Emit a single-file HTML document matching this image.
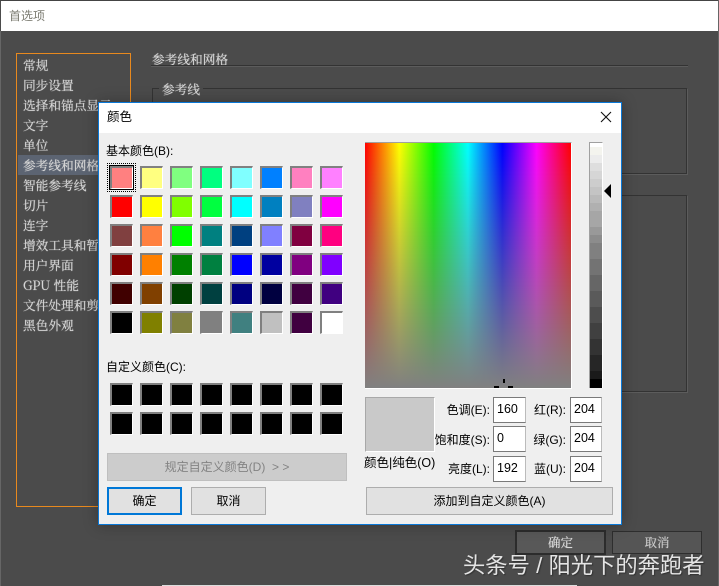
<!DOCTYPE html>
<html><head><meta charset="utf-8">
<style>
html,body{margin:0;padding:0;}
body{width:719px;height:586px;position:relative;overflow:hidden;background:#4b4b4b;font-family:"Liberation Sans","Noto Sans CJK SC",sans-serif;font-size:12px;color:#000;}
.a{position:absolute;box-sizing:border-box;}
.t{position:absolute;white-space:nowrap;line-height:16px;}
.li{position:absolute;left:23px;font-size:12.7px;line-height:20px;color:#d6d6d6;white-space:nowrap;font-family:"Noto Serif CJK SC","Noto Sans CJK SC",serif;text-shadow:0 0 .7px #d6d6d6;}
.s{position:absolute;box-sizing:border-box;width:23px;height:23px;border:2px solid;border-color:#808080 #fff #fff #808080;border-width:2px 1px 1px 2px;}
.in{position:absolute;box-sizing:border-box;width:33px;height:26px;background:#fff;border:1px solid #7a7a7a;border-right-color:#bbb;font-size:12.5px;line-height:22px;padding-left:3px;}
.in.w{width:32px;}
.lb{position:absolute;white-space:nowrap;font-size:12px;line-height:16px;text-align:right;}
.btn{position:absolute;box-sizing:border-box;background:#e1e1e1;border:1px solid #adadad;text-align:center;font-size:12px;line-height:26px;}
</style></head><body>
<div class="a" style="left:0;top:0;width:719px;height:1px;background:#444"></div>
<div class="a" style="left:1px;top:1px;width:717px;height:30px;background:#fff"></div>
<div class="t" style="left:9px;top:8px;color:#7c7c72;font-size:12px">首选项</div>
<div class="a" style="left:0;top:31px;width:1px;height:555px;background:#666"></div>
<div class="a" style="left:718px;top:0;width:1px;height:586px;background:#666"></div>

<div class="a" style="left:16px;top:53px;width:115px;height:454px;border:1px solid #e8891e;background:#4b4b4b"></div>
<div class="a" style="left:18px;top:155px;width:90px;height:20px;background:#5c6472"></div>
<div class="li" style="top:55px">常规</div>
<div class="li" style="top:75px">同步设置</div>
<div class="li" style="top:95px">选择和锚点显示</div>
<div class="li" style="top:115px">文字</div>
<div class="li" style="top:135px">单位</div>
<div class="li" style="top:155px">参考线和网格</div>
<div class="li" style="top:175px">智能参考线</div>
<div class="li" style="top:195px">切片</div>
<div class="li" style="top:215px">连字</div>
<div class="li" style="top:235px">增效工具和暂存盘</div>
<div class="li" style="top:255px">用户界面</div>
<div class="li" style="top:275px">GPU 性能</div>
<div class="li" style="top:295px">文件处理和剪贴板</div>
<div class="li" style="top:315px">黑色外观</div>

<div class="li" style="left:152px;top:49px">参考线和网格</div>
<div class="a" style="left:151px;top:65px;width:537px;height:2px;border-top:1px solid #333;border-bottom:1px solid #5c5c5c"></div>
<div class="a" style="left:152px;top:88px;width:535px;height:86px;border:1px solid #333;box-shadow:1px 1px 0 #5c5c5c"></div>
<div class="a" style="left:159px;top:80px;width:44px;height:18px;background:#4b4b4b"></div>
<div class="li" style="left:162px;top:79px">参考线</div>
<div class="a" style="left:152px;top:195px;width:535px;height:197px;border:1px solid #333;box-shadow:1px 1px 0 #5c5c5c"></div>

<div class="a" style="left:515px;top:530px;width:91px;height:25px;background:#585858;border:2px solid #2c2c2c;color:#ddd;text-align:center;line-height:21px;font-family:'Noto Serif CJK SC',serif;font-size:12.5px;text-shadow:0 0 .6px #ddd">确定</div>
<div class="a" style="left:612px;top:531px;width:90px;height:23px;background:#555;border:1px solid #2e2e2e;color:#ccc;text-align:center;line-height:21px;font-family:'Noto Serif CJK SC',serif;font-size:12.5px;text-shadow:0 0 .6px #ccc">取消</div>
<div class="a" style="left:162px;top:585px;width:415px;height:1px;background:#ddd"></div>

<div class="a" style="left:98px;top:102px;width:524px;height:423px;background:#efefef;border:1px solid #0a78d7;box-shadow:0 0 14px rgba(0,0,0,.28)">
<div class="a" style="left:0;top:0;width:522px;height:30px;background:#fff"></div>
</div>
<div class="t" style="left:107px;top:109px;font-size:12.5px">颜色</div>
<svg class="a" style="left:600px;top:111px" width="12" height="12"><path d="M1 1L11 11M11 1L1 11" stroke="#111" stroke-width="1.1" fill="none"/></svg>

<div class="t" style="left:106px;top:143px">基本颜色(B):</div>
<div class="a" style="left:107px;top:163px;width:29px;height:29px;border:1px dotted #000"></div>
<div class="a" style="left:109px;top:165px;width:25px;height:25px;border:1px solid #000"></div>
<div class="s" style="left:110px;top:166px;background:#ff8080"></div>
<div class="s" style="left:140px;top:166px;background:#ffff80"></div>
<div class="s" style="left:170px;top:166px;background:#80ff80"></div>
<div class="s" style="left:200px;top:166px;background:#00ff80"></div>
<div class="s" style="left:230px;top:166px;background:#80ffff"></div>
<div class="s" style="left:260px;top:166px;background:#0080ff"></div>
<div class="s" style="left:290px;top:166px;background:#ff80c0"></div>
<div class="s" style="left:320px;top:166px;background:#ff80ff"></div>
<div class="s" style="left:110px;top:195px;background:#ff0000"></div>
<div class="s" style="left:140px;top:195px;background:#ffff00"></div>
<div class="s" style="left:170px;top:195px;background:#80ff00"></div>
<div class="s" style="left:200px;top:195px;background:#00ff40"></div>
<div class="s" style="left:230px;top:195px;background:#00ffff"></div>
<div class="s" style="left:260px;top:195px;background:#0080c0"></div>
<div class="s" style="left:290px;top:195px;background:#8080c0"></div>
<div class="s" style="left:320px;top:195px;background:#ff00ff"></div>
<div class="s" style="left:110px;top:224px;background:#804040"></div>
<div class="s" style="left:140px;top:224px;background:#ff8040"></div>
<div class="s" style="left:170px;top:224px;background:#00ff00"></div>
<div class="s" style="left:200px;top:224px;background:#008080"></div>
<div class="s" style="left:230px;top:224px;background:#004080"></div>
<div class="s" style="left:260px;top:224px;background:#8080ff"></div>
<div class="s" style="left:290px;top:224px;background:#800040"></div>
<div class="s" style="left:320px;top:224px;background:#ff0080"></div>
<div class="s" style="left:110px;top:253px;background:#800000"></div>
<div class="s" style="left:140px;top:253px;background:#ff8000"></div>
<div class="s" style="left:170px;top:253px;background:#008000"></div>
<div class="s" style="left:200px;top:253px;background:#008040"></div>
<div class="s" style="left:230px;top:253px;background:#0000ff"></div>
<div class="s" style="left:260px;top:253px;background:#0000a0"></div>
<div class="s" style="left:290px;top:253px;background:#800080"></div>
<div class="s" style="left:320px;top:253px;background:#8000ff"></div>
<div class="s" style="left:110px;top:282px;background:#400000"></div>
<div class="s" style="left:140px;top:282px;background:#804000"></div>
<div class="s" style="left:170px;top:282px;background:#004000"></div>
<div class="s" style="left:200px;top:282px;background:#004040"></div>
<div class="s" style="left:230px;top:282px;background:#000080"></div>
<div class="s" style="left:260px;top:282px;background:#000040"></div>
<div class="s" style="left:290px;top:282px;background:#400040"></div>
<div class="s" style="left:320px;top:282px;background:#400080"></div>
<div class="s" style="left:110px;top:311px;background:#000000"></div>
<div class="s" style="left:140px;top:311px;background:#808000"></div>
<div class="s" style="left:170px;top:311px;background:#808040"></div>
<div class="s" style="left:200px;top:311px;background:#808080"></div>
<div class="s" style="left:230px;top:311px;background:#408080"></div>
<div class="s" style="left:260px;top:311px;background:#c0c0c0"></div>
<div class="s" style="left:290px;top:311px;background:#400040"></div>
<div class="s" style="left:320px;top:311px;background:#ffffff"></div>

<div class="t" style="left:106px;top:359px">自定义颜色(C):</div>
<div class="s" style="left:110px;top:383px;background:#000"></div>
<div class="s" style="left:140px;top:383px;background:#000"></div>
<div class="s" style="left:170px;top:383px;background:#000"></div>
<div class="s" style="left:200px;top:383px;background:#000"></div>
<div class="s" style="left:230px;top:383px;background:#000"></div>
<div class="s" style="left:260px;top:383px;background:#000"></div>
<div class="s" style="left:290px;top:383px;background:#000"></div>
<div class="s" style="left:320px;top:383px;background:#000"></div>
<div class="s" style="left:110px;top:412px;background:#000"></div>
<div class="s" style="left:140px;top:412px;background:#000"></div>
<div class="s" style="left:170px;top:412px;background:#000"></div>
<div class="s" style="left:200px;top:412px;background:#000"></div>
<div class="s" style="left:230px;top:412px;background:#000"></div>
<div class="s" style="left:260px;top:412px;background:#000"></div>
<div class="s" style="left:290px;top:412px;background:#000"></div>
<div class="s" style="left:320px;top:412px;background:#000"></div>

<div class="btn" style="left:107px;top:453px;width:240px;height:28px;background:#ccc;border-color:#bfbfbf;color:#838383">规定自定义颜色(D) &nbsp;&gt; &gt;</div>
<div class="btn" style="left:107px;top:487px;width:75px;height:28px;border:2px solid #0078d7;line-height:24px">确定</div>
<div class="btn" style="left:191px;top:487px;width:75px;height:28px">取消</div>

<div class="a" style="left:365px;top:142px;width:207px;height:247px;border-top:1px solid #a0a0a0;border-right:1px solid #fff;border-bottom:1px solid #fff;background:linear-gradient(to bottom,rgba(128,128,128,0),#808080),linear-gradient(to right,#f00,#ff0 16.67%,#0f0 33.33%,#0ff 50%,#00f 66.67%,#f0f 83.33%,#f00)"></div>
<div class="a" style="left:503px;top:379px;width:2px;height:4px;background:#000"></div>
<div class="a" style="left:494px;top:386px;width:5px;height:2px;background:#000"></div>
<div class="a" style="left:508px;top:386px;width:5px;height:2px;background:#000"></div>

<div class="a" style="left:589px;top:142px;width:14px;height:246px;border-top:1px solid #a0a0a0;border-left:1px solid #a0a0a0;border-right:1px solid #fff;background:linear-gradient(to bottom,#fff 0,#fff 4px,#f4f4ee 4px,#f4f4ee 12px,#ececec 12px,#ececec 20px,#dedede 20px,#dedede 28px,#d6d6d6 28px,#d6d6d6 36px,#cdcdcd 36px,#cdcdcd 44px,#c4c4c4 44px,#c4c4c4 52px,#bababa 52px,#bababa 60px,#b0b0b0 60px,#b0b0b0 68px,#a6a6a6 68px,#a6a6a6 84px,#999 84px,#999 92px,#8c8c8c 92px,#8c8c8c 100px,#808080 100px,#808080 116px,#737373 116px,#737373 132px,#666 132px,#666 148px,#5a5a5a 148px,#5a5a5a 164px,#4d4d4d 164px,#4d4d4d 180px,#404040 180px,#404040 196px,#333 196px,#333 212px,#262626 212px,#262626 228px,#1a1a1a 228px,#1a1a1a 236px,#000 236px)"></div>
<svg class="a" style="left:603px;top:184px" width="9" height="15"><path d="M8 0V14L1 7Z" fill="#000"/></svg>

<div class="a" style="left:365px;top:397px;width:70px;height:55px;background:#c9c9c9;border:1px solid;border-color:#a8a8a8 #fff #fff #a8a8a8"></div>
<div class="t" style="left:364px;top:455px;font-size:12.5px">颜色|纯色(O)</div>

<div class="lb" style="right:229px;top:402px">色调(E):</div>
<div class="lb" style="right:229px;top:432px">饱和度(S):</div>
<div class="lb" style="right:229px;top:461px">亮度(L):</div>
<div class="in" style="left:493px;top:397px">160</div>
<div class="in" style="left:493px;top:426px">0</div>
<div class="in" style="left:493px;top:456px">192</div>
<div class="lb" style="right:153px;top:402px">红(R):</div>
<div class="lb" style="right:153px;top:432px">绿(G):</div>
<div class="lb" style="right:153px;top:461px">蓝(U):</div>
<div class="in w" style="left:570px;top:397px">204</div>
<div class="in w" style="left:570px;top:426px">204</div>
<div class="in w" style="left:570px;top:456px">204</div>

<div class="btn" style="left:366px;top:487px;width:247px;height:28px">添加到自定义颜色(A)</div>

<div class="t" style="left:463px;top:552px;font-size:22.3px;line-height:28px;color:#e4e4e4;text-shadow:1px 1px 1px #333">头条号 / 阳光下的奔跑者</div>
</body></html>
